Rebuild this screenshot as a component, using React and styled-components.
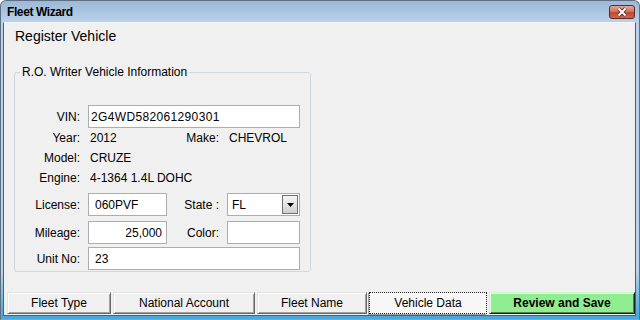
import React from 'react';
import styled, { createGlobalStyle } from 'styled-components';

const GlobalStyle = createGlobalStyle`
  html, body {
    margin: 0;
    padding: 0;
    background: #fff;
  }
  body {
    font-family: "Liberation Sans", Arial, sans-serif;
    font-size: 12px;
    color: #000;
  }
  * {
    box-sizing: border-box;
  }
`;

const Window = styled.div`
  display: flex;
  flex-direction: column;
  width: 640px;
  height: 320px;
  padding: 0 3px 3px 2px;
  border: 1px solid #5f6f82;
  border-bottom-color: #8fa3b8;
  border-radius: 6px 6px 0 0;
  background: linear-gradient(
    to bottom,
    #9db9d7 0,
    #b9d1ea 21px,
    #b8d3ec 85%,
    #4aa8dc calc(100% - 4px),
    #4aa8dc 100%
  );
`;

const TitleBar = styled.div`
  display: flex;
  align-items: center;
  justify-content: space-between;
  height: 21px;
  padding: 1px 1px 0 4px;
`;

const Title = styled.span`
  font-size: 12px;
  font-weight: bold;
  letter-spacing: -0.4px;
`;

const Client = styled.div`
  flex: 1;
  display: flex;
  flex-direction: column;
  min-height: 0;
  background: #f0f0f0;
  border: 1px solid #4f5e70;
  border-top-color: #f2f5f9;
`;

const Heading = styled.h1`
  margin: 5px 0 21px 11px;
  font-size: 14px;
  line-height: 16px;
  font-weight: normal;
`;

const Group = styled.fieldset`
  width: 297px;
  margin: 0 0 0 10px;
  padding: 26px 10px 1px 0;
  border: 1px solid #d0d8de;
  border-radius: 3px;
  min-width: 0;
`;

const Legend = styled.legend`
  margin-left: 5px;
  padding: 0 2px;
  font-size: 12px;
  line-height: 14px;
`;

const Row = styled.div`
  display: grid;
  grid-template-columns: 73px 79px 60px 73px;
  align-items: center;
  height: ${p => p.$h}px;
  margin-top: ${p => p.$mt || 0}px;
`;

const Label = styled.span`
  grid-column: ${p => (p.$second ? '3' : '1')};
  padding-right: 8px;
  text-align: right;
  white-space: nowrap;
`;

const Value = styled.span`
  grid-column: ${p => (p.$wide ? '2 / 5' : 'auto')};
  padding-left: 2px;
  white-space: nowrap;
`;

const TextBox = styled.input`
  grid-column: ${p => (p.$wide ? '2 / 5' : 'auto')};
  width: 100%;
  height: 23px;
  margin: 0;
  padding: 0 ${p => (p.$right ? 4 : 2)}px 0 ${p => p.$indent ?? 6}px;
  border: 1px solid #abadb3;
  border-radius: 0;
  background: #fff;
  font: inherit;
  font-size: 12px;
  letter-spacing: ${p => (p.$spaced ? '0.35px' : 'normal')};
  color: #000;
  text-align: ${p => (p.$right ? 'right' : 'left')};
  outline: none;
`;

const Combo = styled.div`
  display: flex;
  align-items: center;
  justify-content: space-between;
  height: 23px;
  padding: 0 1px 0 4px;
  border: 1px solid #abadb3;
  background: #fff;
`;

const DropButton = styled.span`
  display: flex;
  align-items: center;
  justify-content: center;
  width: 16px;
  height: 19px;
  border: 1px solid #707070;
  background: linear-gradient(to bottom, #f4f4f4 0%, #e4e4e4 50%, #cfcfcf 100%);
`;

const TabBar = styled.div`
  display: flex;
  gap: 2px;
  margin-top: auto;
  padding: 0 0 1px 3px;
`;

const Tab = styled.button`
  width: ${p => p.$w}px;
  height: 22px;
  margin: 0;
  padding: 0 0 1px;
  font: inherit;
  font-size: 12px;
  font-weight: ${p => (p.$primary ? 'bold' : 'normal')};
  color: #000;
  background: ${p => (p.$primary ? '#90ee90' : p.$active ? '#f7f7f7' : '#f0f0f0')};
  border: 1px solid;
  border-color: ${p =>
    p.$active
      ? '#222'
      : p.$primary
      ? '#c9f7c9 #1e1e1e #1e1e1e #c9f7c9'
      : '#e3e3e3 #696969 #696969 #e3e3e3'};
  border-style: ${p => (p.$active ? 'dotted' : 'solid')};
  box-shadow: ${p =>
    p.$active
      ? '-1px 1px 0 #a0a0a0'
      : p.$primary
      ? 'inset 1px 1px #e6ffe6, inset -1px -1px #4f7f4f'
      : 'inset 1px 1px #fff, inset -1px -1px #a0a0a0'};
`;

function CloseIcon() {
  return (
    <svg width="26" height="14" viewBox="0 0 26 14">
      <defs>
        <linearGradient id="closeGrad" x1="0" y1="0" x2="0" y2="1">
          <stop offset="0" stopColor="#e9ab9b" />
          <stop offset="0.45" stopColor="#d57560" />
          <stop offset="0.55" stopColor="#c04830" />
          <stop offset="1" stopColor="#d06a50" />
        </linearGradient>
      </defs>
      <rect x="0.5" y="0.5" width="25" height="13" rx="2.5" fill="url(#closeGrad)" stroke="#5e2a24" />
      <path d="M9.5 3.5 L16.5 10.5 M16.5 3.5 L9.5 10.5" stroke="#4a2622" strokeWidth="3.6" />
      <path d="M9.5 3.5 L16.5 10.5 M16.5 3.5 L9.5 10.5" stroke="#fff" strokeWidth="2" />
    </svg>
  );
}

const tabs = [
  { label: 'Fleet Type', w: 104 },
  { label: 'National Account', w: 142 },
  { label: 'Fleet Name', w: 110 },
  { label: 'Vehicle Data', w: 118, active: true },
  { label: 'Review and Save', w: 146, primary: true }
];

export default function App() {
  return (
    <>
      <GlobalStyle />
      <Window>
        <TitleBar>
          <Title>Fleet Wizard</Title>
          <CloseIcon />
        </TitleBar>
        <Client>
          <Heading>Register Vehicle</Heading>
          <Group>
            <Legend>R.O. Writer Vehicle Information</Legend>

            <Row $h={23}>
              <Label>VIN:</Label>
              <TextBox $wide $indent={2} $spaced readOnly value="2G4WD582061290301" />
            </Row>
            <Row $h={20}>
              <Label>Year:</Label>
              <Value>2012</Value>
              <Label $second>Make:</Label>
              <Value>CHEVROL</Value>
            </Row>
            <Row $h={20}>
              <Label>Model:</Label>
              <Value>CRUZE</Value>
            </Row>
            <Row $h={20}>
              <Label>Engine:</Label>
              <Value $wide>4-1364 1.4L DOHC</Value>
            </Row>

            <Row $h={23} $mt={5}>
              <Label>License:</Label>
              <TextBox readOnly value="060PVF" />
              <Label $second>State :</Label>
              <Combo>
                <span>FL</span>
                <DropButton>
                  <svg width="7" height="4" viewBox="0 0 7 4">
                    <polygon points="0,0 7,0 3.5,4" fill="#000" />
                  </svg>
                </DropButton>
              </Combo>
            </Row>
            <Row $h={23} $mt={5}>
              <Label>Mileage:</Label>
              <TextBox $right readOnly value="25,000" />
              <Label $second>Color:</Label>
              <TextBox readOnly value="" />
            </Row>
            <Row $h={23} $mt={3}>
              <Label>Unit No:</Label>
              <TextBox $wide readOnly value="23" />
            </Row>
          </Group>

          <TabBar>
            {tabs.map(tab => (
              <Tab key={tab.label} $w={tab.w} $active={tab.active} $primary={tab.primary}>
                {tab.label}
              </Tab>
            ))}
          </TabBar>
        </Client>
      </Window>
    </>
  );
}
